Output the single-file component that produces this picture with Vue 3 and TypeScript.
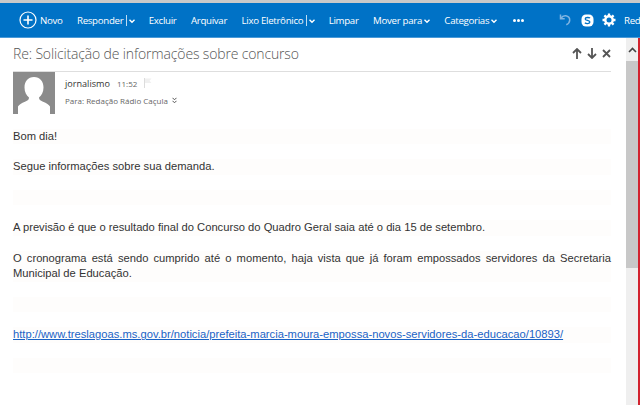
<script setup lang="ts">
interface Action { label: string; split?: boolean; menu?: boolean }
const actions: Action[] = [
  { label: 'Responder', split: true },
  { label: 'Excluir' },
  { label: 'Arquivar' },
  { label: 'Lixo Eletrônico', split: true },
  { label: 'Limpar' },
  { label: 'Mover para', menu: true },
  { label: 'Categorias', menu: true },
]
</script>

<template>
  <div class="page">
    <header class="toolbar">
      <button class="new">
        <svg width="18" height="18" viewBox="0 0 18 18" fill="none" stroke="#fff">
          <circle cx="9" cy="9" r="8" stroke-width="1.2" />
          <path d="M9 4.500v9M4.500 9h9" stroke-width="1.600" />
        </svg>
        <span>Novo</span>
      </button>
      <div v-for="a in actions" :key="a.label" class="action" :class="{ split: a.split }">
        <span>{{ a.label }}</span>
        <i v-if="a.split" class="sep"></i>
        <svg v-if="a.split || a.menu" class="chev" width="6" height="5" viewBox="0 0 6 5" fill="none" stroke="#fff" stroke-width="1.4">
          <path d="M.5.800L3 3.300 5.500.800" />
        </svg>
      </div>
      <div class="dots"><i></i><i></i><i></i></div>
      <div class="right">
        <svg width="14" height="14" viewBox="0 0 14 14" fill="none" stroke="#7fb4e2" stroke-width="1.5">
          <path d="M1.5 1.5v4.200h4.200M1.800 5.500c1.200-1.800 3-3 5-2.700 2.300.4 4 2.200 3.900 4.400-.1 2.100-1.500 3.700-3.400 4.500" />
        </svg>
        <svg width="13" height="13" viewBox="0 0 13 13">
          <rect x=".5" y=".5" width="12" height="12" rx="4.500" fill="#fff" />
          <path d="M9 4.200C8.300 3.300 4.200 3 4.200 4.900c0 1.900 4.700 1.200 4.700 3.200 0 1.900-4 1.700-5 .6" fill="none" stroke="#0072c6" stroke-width="1.300" />
        </svg>
        <svg width="14" height="14" viewBox="0 0 14 14">
          <circle cx="7" cy="7" r="3.700" fill="none" stroke="#fff" stroke-width="2.400" />
          <path d="M7 .5v13M.5 7h13M2.400 2.400l9.200 9.200M11.600 2.400l-9.200 9.200" stroke="#fff" stroke-width="2.300" stroke-dasharray="2.600 7.800" />
        </svg>
        <span>Redação</span>
      </div>
    </header>

    <div class="main">
      <main class="reading">
        <div class="subject-row">
          <h1>Re: Solicitação de informações sobre concurso</h1>
          <div class="nav">
            <svg width="10" height="11" viewBox="0 0 10 11" fill="none" stroke="#555" stroke-width="1.800"><path d="M5 11V1.500M1 5l4-4 4 4" /></svg>
            <svg width="10" height="11" viewBox="0 0 10 11" fill="none" stroke="#555" stroke-width="1.800"><path d="M5 0v9.500M1 6l4 4 4-4" /></svg>
            <svg width="9" height="9" viewBox="0 0 9 9" fill="none" stroke="#555" stroke-width="1.800"><path d="M1 1l7 7M8 1l-7 7" /></svg>
          </div>
        </div>

        <div class="meta">
          <svg class="avatar" width="42" height="42" viewBox="0 0 42 42">
            <rect width="42" height="42" fill="#8b8b8b" />
            <path d="M21 5c6 0 9.500 4.500 9.500 10.500 0 4.500-2 8-4.500 10 0 2 1 3 4 4.200 3.500 1.400 6 2.800 7 4.800v7.500H5V34.500c1-2 3.500-3.400 7-4.800 3-1.200 4-2.200 4-4.200-2.500-2-4.500-5.500-4.500-10C11.500 9.500 15 5 21 5z" fill="#fff" />
          </svg>
          <div class="meta-text">
            <div class="sender">
              <span class="name">jornalismo</span>
              <span class="time">11:52</span>
              <svg width="8" height="10" viewBox="0 0 8 10"><path d="M.5 0v10" stroke="#dcdcdc" /><path d="M1 .5h6.500L5.500 2.800 7.500 5H1z" fill="#f0f0f0" /></svg>
            </div>
            <div class="to">
              <span>Para: Redação Rádio Caçula</span>
              <svg width="5" height="7" viewBox="0 0 5 7" fill="none" stroke="#555"><path d="M.5.800l2 2 2-2M.5 3.800l2 2 2-2" /></svg>
            </div>
          </div>
        </div>

        <article class="body">
          <p>Bom dia!</p>
          <p>Segue informações sobre sua demanda.</p>
          <p class="blank"></p>
          <p>A previsão é que o resultado final do Concurso do Quadro Geral saia até o dia 15 de setembro.</p>
          <p class="justify">O cronograma está sendo cumprido até o momento, haja vista que já foram empossados servidores da Secretaria Municipal de Educação.</p>
          <p class="blank"></p>
          <p><a href="#">http://www.treslagoas.ms.gov.br/noticia/prefeita-marcia-moura-empossa-novos-servidores-da-educacao/10893/</a></p>
          <p class="blank"></p>
        </article>
      </main>

      <aside class="scrollbar">
        <div class="up">
          <svg width="9" height="6" viewBox="0 0 9 6" fill="none" stroke="#444" stroke-width="1.600"><path d="M1 5l3.500-3.500L8 5" /></svg>
        </div>
        <div class="thumb"></div>
      </aside>
      <div class="edge"></div>
    </div>
  </div>
</template>

<style scoped>
.page {
  width: 640px;
  height: 405px;
  overflow: hidden;
  display: flex;
  flex-direction: column;
  background: #fff;
  border-top: 3px solid #c9c9c9;
  box-sizing: border-box;
}
.toolbar {
  height: 35px;
  flex: none;
  background: #0072c6;
  border-bottom: 1px solid #4a9ad8;
  box-sizing: border-box;
  display: flex;
  align-items: center;
  padding-left: 19px;
  color: #fff;
  font: 9.7px "Open Sans", sans-serif;
  letter-spacing: -0.3px;
  gap: 14.4px;
  white-space: nowrap;
}
.new {
  display: flex;
  align-items: center;
  gap: 3px;
  padding: 0;
  border: 0;
  background: none;
  color: inherit;
  font: inherit;
  letter-spacing: inherit;
}
.action {
  display: flex;
  align-items: center;
}
.action.split {
  margin-right: -1px;
}
.sep {
  width: 1px;
  height: 11px;
  background: #bcdcf3;
  margin: 0 0 0 3px;
}
.chev {
  margin-left: 2px;
  margin-top: 2px;
}
.dots {
  display: flex;
  gap: 1px;
  margin-left: 1px;
}
.dots i {
  width: 3px;
  height: 3px;
  border-radius: 50%;
  background: #fff;
}
.right {
  display: flex;
  align-items: center;
  gap: 8px;
  margin-left: 21px;
}
.main {
  flex: 1;
  display: flex;
  min-height: 0;
}
.reading {
  width: 626px;
  flex: none;
  box-sizing: border-box;
  padding: 0 15px 0 13px;
}
.subject-row {
  height: 34px;
  display: flex;
  align-items: center;
  justify-content: space-between;
  border-bottom: 1px solid #dedede;
  box-sizing: border-box;
}
h1 {
  margin: 0 0 2px;
  font: 300 14px "Open Sans", sans-serif;
  letter-spacing: -0.15px;
  color: #555;
  white-space: nowrap;
}
.nav {
  display: flex;
  align-items: center;
  gap: 5px;
  margin-bottom: 2px;
}
.meta {
  display: flex;
  gap: 10px;
}
.avatar {
  display: block;
}
.meta-text {
  padding-top: 4px;
  font-family: "Open Sans", sans-serif;
}
.sender {
  display: flex;
  align-items: center;
  gap: 7px;
  height: 14px;
}
.name {
  font-size: 9.1px;
  color: #333;
}
.time {
  font-size: 8px;
  color: #666;
}
.to {
  display: flex;
  align-items: center;
  gap: 4px;
  margin-top: 5px;
  font-size: 8px;
  color: #666;
}
.body {
  padding-top: 15px;
  font: 11.19px/15.3px "Liberation Sans", sans-serif;
  color: #333;
}
.body p {
  margin: 0 0 15.200px;
  min-height: 15.300px;
  background: #fefdfc;
}
.justify {
  text-align: justify;
}
a {
  color: #1a63c6;
}
.scrollbar {
  width: 12px;
  flex: none;
  background: #efefef;
  display: flex;
  flex-direction: column;
}
.up {
  height: 23px;
  display: flex;
  align-items: center;
  justify-content: center;
}
.thumb {
  height: 207px;
  background: #c8c8c8;
}
.edge {
  width: 2px;
  flex: none;
  background: #d2232f;
}
</style>
